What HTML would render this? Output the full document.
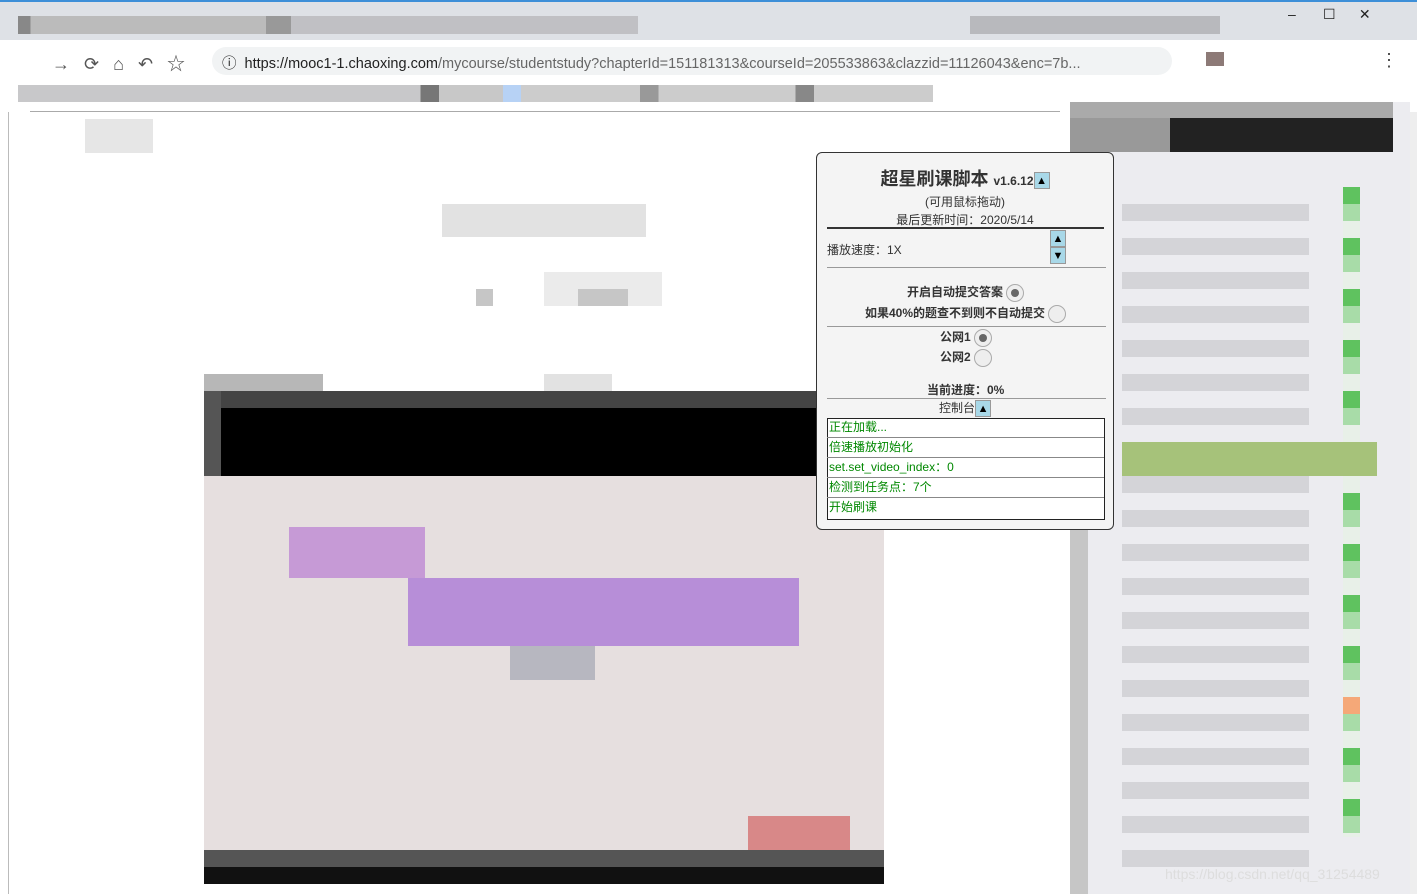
<!DOCTYPE html>
<html><head><meta charset="utf-8"><style>
*{margin:0;padding:0;box-sizing:border-box}
body{width:1417px;height:894px;overflow:hidden;position:relative;background:#fff;font-family:"Liberation Sans","Noto Sans CJK SC",sans-serif}
.a{position:absolute}
.p{position:absolute;left:816px;top:152px;width:298px;height:378px;background:#f4f4f4;border:1px solid #333;border-radius:6px;font-size:12px;color:#333;text-align:center}
.btn{display:inline-block;width:16px;height:17px;background:#a8d8e8;border:1px solid #999;font-size:11px;line-height:16px;color:#000;vertical-align:middle}
.rad{display:inline-block;width:18px;height:18px;border-radius:50%;border:1px solid #aaa;background:#eee;vertical-align:middle;position:relative}
.rad.on:after{content:"";position:absolute;left:4px;top:4px;width:8px;height:8px;border-radius:50%;background:#666}
.log{position:absolute;left:10px;width:277px;height:20px;border-bottom:1px solid #888;color:#080;text-align:left;padding-left:2px;line-height:19px}
</style></head><body>
<div class="a" style="left:0;top:0;width:1417px;height:40px;background:#dee1e6"></div>
<div class="a" style="left:0;top:0;width:1417px;height:2px;background:#3d8fd8"></div>
<div class="a" style="left:18px;top:16px;width:620px;height:18px;background:linear-gradient(90deg,#888 0 2%,#bbb 2% 40%,#999 40% 44%,#c0c0c4 44% 100%)"></div>
<div class="a" style="left:970px;top:16px;width:250px;height:18px;background:#b8b9bd"></div>
<div class="a" style="left:1288px;top:6px;font-size:14px;color:#222">–&nbsp;&nbsp;&nbsp;&nbsp;&nbsp;&nbsp;&nbsp;☐&nbsp;&nbsp;&nbsp;&nbsp;&nbsp;&nbsp;✕</div>
<div class="a" style="left:0;top:40px;width:1417px;height:42px;background:#fff"></div>
<div class="a" style="left:52px;top:50px;font-size:18px;color:#555;letter-spacing:14px">→⟳⌂↶☆</div>
<div class="a" style="left:212px;top:47px;width:960px;height:28px;border-radius:14px;background:#f1f3f4"></div>
<div class="a" style="left:222px;top:52px;font-size:14.5px;color:#222">ⓘ&nbsp; https://mooc1-1.chaoxing.com<span style="color:#666">/mycourse/studentstudy?chapterId=151181313&amp;courseId=205533863&amp;clazzid=11126043&amp;enc=7b...</span></div>
<div class="a" style="left:1206px;top:52px;width:18px;height:14px;background:#8d7a77"></div>
<div class="a" style="left:1380px;top:50px;font-size:18px;color:#444">⋮</div>
<div class="a" style="left:18px;top:85px;width:915px;height:17px;background:linear-gradient(90deg,#c8c8ca 0 44%,#777 44% 46%,#c8c8c8 46% 53%,#b7d2f5 53% 55%,#ccc 55% 68%,#999 68% 70%,#ccc 70% 85%,#888 85% 87%,#ccc 87%)"></div>
<div class="a" style="left:30px;top:111px;width:1030px;height:1px;background:#aaa"></div>
<div class="a" style="left:8px;top:112px;width:1px;height:782px;background:#bbb"></div>
<div class="a" style="left:85px;top:119px;width:68px;height:34px;background:#e6e6e6"></div>
<div class="a" style="left:442px;top:204px;width:204px;height:33px;background:#e2e2e2"></div>
<div class="a" style="left:476px;top:289px;width:17px;height:17px;background:#c6c6c6"></div>
<div class="a" style="left:544px;top:272px;width:118px;height:34px;background:#ebebeb"></div>
<div class="a" style="left:578px;top:289px;width:50px;height:17px;background:#c6c6c6"></div>
<div class="a" style="left:204px;top:374px;width:119px;height:17px;background:#b7b7b7"></div>
<div class="a" style="left:544px;top:374px;width:68px;height:17px;background:#e2e2e2"></div>
<div class="a" style="left:204px;top:391px;width:680px;height:493px;background:#e6dfdf"></div>
<div class="a" style="left:204px;top:391px;width:612px;height:17px;background:#444"></div>
<div class="a" style="left:204px;top:408px;width:612px;height:68px;background:#000"></div>
<div class="a" style="left:204px;top:391px;width:17px;height:85px;background:#555"></div>
<div class="a" style="left:289px;top:527px;width:136px;height:51px;background:#c69ad6"></div>
<div class="a" style="left:408px;top:578px;width:391px;height:68px;background:#b78ed8"></div>
<div class="a" style="left:510px;top:646px;width:85px;height:34px;background:#b7b7c0"></div>
<div class="a" style="left:748px;top:816px;width:102px;height:34px;background:#d88888"></div>
<div class="a" style="left:204px;top:850px;width:680px;height:34px;background:#111"></div>
<div class="a" style="left:204px;top:850px;width:680px;height:17px;background:#555"></div>
<div class="a" style="left:1070px;top:102px;width:340px;height:792px;background:#ececf0"></div>
<div class="a" style="left:1070px;top:118px;width:323px;height:34px;background:#222"></div>
<div class="a" style="left:1070px;top:118px;width:100px;height:34px;background:#999"></div>
<div class="a" style="left:1070px;top:102px;width:323px;height:16px;background:#aaa"></div>
<div class="a" style="left:1410px;top:112px;width:7px;height:782px;background:#eee"></div>
<div class="a" style="left:1070px;top:520px;width:18px;height:374px;background:#c6c6c6"></div>
<div class="a" style="left:1343px;top:187px;width:17px;height:650px;background:repeating-linear-gradient(#5fc25f 0 17px,#a8dca8 17px 34px,#e8f0e8 34px 51px)"></div>
<div class="a" style="left:1122px;top:204px;width:187px;height:680px;background:repeating-linear-gradient(#d4d4d8 0 17px,#ececf0 17px 34px)"></div>
<div class="a" style="left:1122px;top:442px;width:255px;height:34px;background:#a6c27a"></div>
<div class="a" style="left:1343px;top:697px;width:17px;height:17px;background:#f5a878"></div>
<div class="a" style="left:1165px;top:866px;font-size:14px;color:#ddd">https://blog.csdn.net/qq_31254489</div>
<div class="p">
<div style="margin-top:12px;font-size:18px;font-weight:bold">超星刷课脚本 <span style="font-size:12px">v1.6.12</span><span class="btn">▲</span></div>
<div style="margin-top:2px">(可用鼠标拖动)</div>
<div style="margin-top:1px">最后更新时间：2020/5/14</div>
<div class="a" style="left:10px;top:74px;width:277px;height:2px;background:#333"></div>
<div class="a" style="left:10px;top:88px">播放速度：1X</div>
<div class="a" style="left:232px;top:77px;width:18px"><span class="btn">▲</span><span class="btn">▼</span></div>
<div class="a" style="left:10px;top:114px;width:279px;height:1px;background:#999"></div>
<div class="a" style="left:90px;top:130px;font-weight:bold">开启自动提交答案 <span class="rad on"></span></div>
<div class="a" style="left:48px;top:151px;font-weight:bold">如果40%的题查不到则不自动提交 <span class="rad"></span></div>
<div class="a" style="left:10px;top:173px;width:279px;height:1px;background:#999"></div>
<div class="a" style="left:123px;top:175px;font-weight:bold">公网1 <span class="rad on"></span></div>
<div class="a" style="left:123px;top:195px;font-weight:bold">公网2 <span class="rad"></span></div>
<div class="a" style="left:110px;top:228px;font-weight:bold">当前进度：0%</div>
<div class="a" style="left:10px;top:245px;width:279px;height:1px;background:#999"></div>
<div class="a" style="left:122px;top:246px">控制台<span class="btn">▲</span></div>
<div class="a" style="left:10px;top:265px;width:278px;height:102px;border:1px solid #222;background:#fff"></div>
<div class="log" style="top:265px">正在加载...</div>
<div class="log" style="top:285px">倍速播放初始化</div>
<div class="log" style="top:305px">set.set_video_index：0</div>
<div class="log" style="top:325px">检测到任务点：7个</div>
<div class="log" style="top:345px;border:0">开始刷课</div>
</div>
</body></html>
